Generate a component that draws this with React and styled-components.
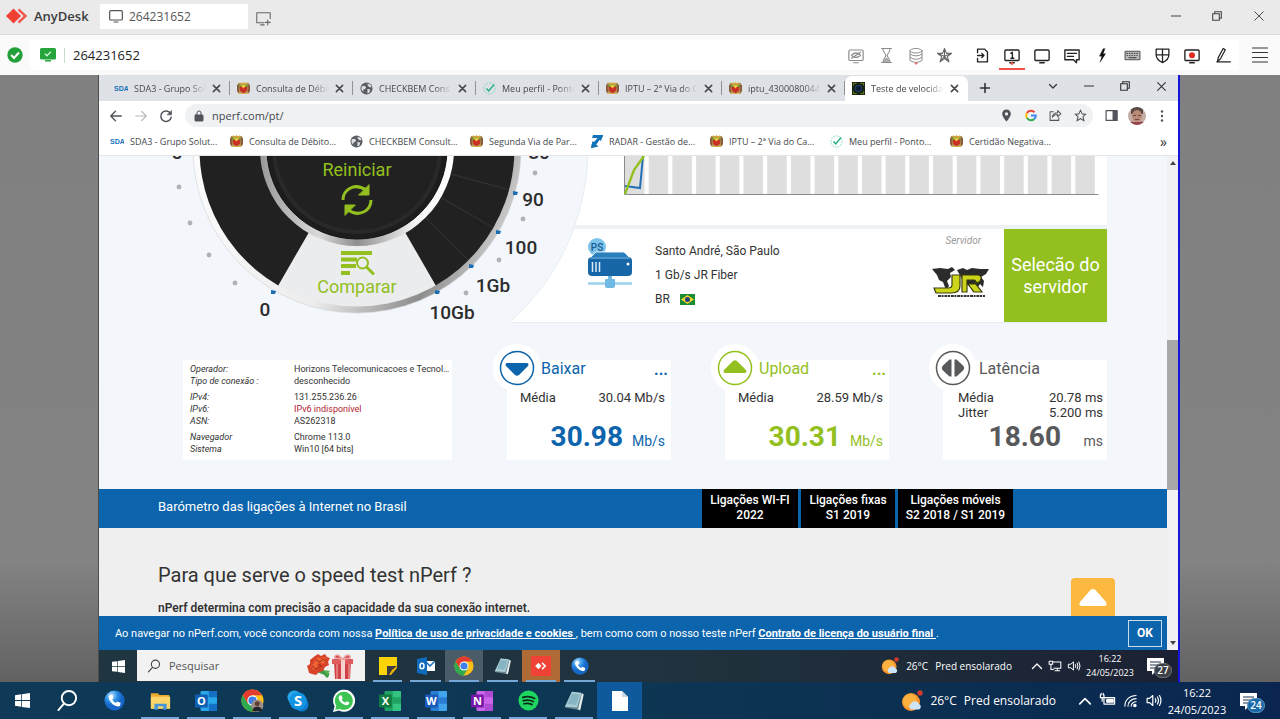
import React from "react";
import styled, { createGlobalStyle, css } from "styled-components";

const UI = `"Open Sans", "Noto Sans", sans-serif`;
const WEB = `Roboto, "Liberation Sans", sans-serif`;
const BLUE = "#0c64ac";
const GREEN = "#93c01f";

const Global = createGlobalStyle`
  *, *::before, *::after { box-sizing: border-box; }
  body { margin: 0; font-family: ${UI}; color: #333; background: #808080; }
  button { font: inherit; color: inherit; background: none; border: 0; padding: 0; margin: 0; }
  input { font: inherit; color: inherit; background: none; border: 0; padding: 0; min-width: 0; }
  svg { display: block; flex: none; }
  h2, p { margin: 0; font-weight: 400; }
`;

/* ---------- shared icon frame ---------- */
const Ico = ({ s = 16, w, h, vb = "0 0 24 24", sw = 1.6, c = "currentColor", fill = "none", children }) => (
  <svg width={w || s} height={h || s} viewBox={vb} fill={fill} stroke={c} strokeWidth={sw} strokeLinecap="round" strokeLinejoin="round" aria-hidden="true">
    {children}
  </svg>
);

const Screen = styled.div`display: flex; flex-direction: column; min-height: 100vh; overflow: hidden;`;

/* ---------- AnyDesk window ---------- */
const TitleBar = styled.header`
  display: flex; align-items: center; height: 35px; padding: 0 15px 2px 6px;
  background: #eaeaea; border-bottom: 1px solid #d9d9d9;
`;
const Brand = styled.div`
  display: flex; align-items: center; gap: 6px; width: 94px; white-space: nowrap;
  font-size: 13px; font-weight: 600; color: #3c3c3c;
`;
const SessionTab = styled.button`
  display: flex; align-items: center; gap: 5px; width: 148px; height: 25px; padding: 0 8px;
  background: #fff; font-size: 12px; color: #555;
`;
const NewTab = styled.button`margin: 4px 0 0 7px; color: #666;`;
const WindowButtons = styled.div`display: flex; align-items: center; gap: 31px; margin-left: auto; color: #444;`;
const AddressRow = styled.div`
  display: flex; align-items: center; height: 40px; padding: 0 12px 0 7px; background: #fafafa;
`;
const AddressField = styled.div`
  display: flex; align-items: center; flex: 1; height: 30px; margin: 0 13px 0 7px; padding: 0 2px 0 10px; background: #fff;
  input { flex: 1; height: 20px; margin-left: 8px; padding-left: 0; font-size: 13px; color: #1e1e1e; outline: none; }
`;
const Divider = styled.i`width: 1px; height: 15px; margin-left: 8px; background: #c9dccb;`;
const ToolGroup = styled.div`display: flex; align-items: center; margin-right: ${(p) => (p.$first ? 10 : 0)}px; color: ${(p) => (p.$first ? "#8c8c8c" : "#222")};`;
const Tool = styled.button`
  display: flex; align-items: center; justify-content: center; width: ${(p) => p.$w || 30}px; height: 30px; padding-top: 1px;
  background: ${(p) => (p.$on ? "linear-gradient(#ef5048, #ef5048) center bottom / 26px 2px no-repeat" : "none")};
`;
const MenuButton = styled.button`color: #333;`;

/* ---------- remote desktop ---------- */
const Stage = styled.main`
  flex: 1; display: flex; padding: 0 100px 0 98px;
  background: linear-gradient(#808080, #838383 80%, #626262);
`;
const Remote = styled.div`
  flex: 1; min-width: 0; display: flex; flex-direction: column;
  border-left: 1px solid #4d4d4d; border-right: 2px solid #1414dc;
`;

/* ---------- browser chrome ---------- */
const TabStrip = styled.div`display: flex; align-items: stretch; height: 26px; padding: 0 11px 0 8px; background: #dee1e6;`;
const Tab = styled.div`
  display: flex; align-items: center; width: 123px; min-width: 0; padding: 0 9px 0 7px; gap: 6px;
  font-size: 9px; color: #45494d;
  ${(p) => p.$active
    ? css`background: #fff; border-radius: 7px 7px 0 0; margin-top: 1px;`
    : css`background: linear-gradient(#8f9398, #8f9398) right center / 1px 14px no-repeat;`}
`;
const TabTitle = styled.span`
  flex: 1; min-width: 0; overflow: hidden; white-space: nowrap;
  -webkit-mask-image: linear-gradient(90deg, #000 76%, transparent);
  mask-image: linear-gradient(90deg, #000 76%, transparent);
`;
const PlainButton = styled.button`display: flex; align-items: center; justify-content: center;`;
const TabControls = styled.div`display: flex; align-items: center; gap: 26px; margin-left: auto; padding-bottom: 4px; color: #333;`;
const Toolbar = styled.div`display: flex; align-items: center; height: 29px; padding: 0 10px; background: #fff; color: #50545a;`;
const NavButtons = styled.div`display: flex; gap: 11px; width: 76px;`;
const Omnibox = styled.div`
  display: flex; align-items: center; flex: 1; height: 23px; padding: 0 6px 0 8px; border-radius: 12px; background: #f0f1f3;
  input { flex: 1; margin-left: 7px; font-size: 11px; outline: none; color: #43474b; }
`;
const IconRow = styled.div`display: flex; align-items: center; gap: ${(p) => p.$gap}px;`;
const ToolbarEnd = styled(IconRow)`margin-left: 12px;`;
const Bookmarks = styled.nav`
  display: flex; align-items: center; height: 26px; padding: 0 11px 3px; background: #fff; border-bottom: 1px solid #e3e5e8;
`;
const Bookmark = styled.a`
  display: flex; align-items: center; gap: 6px; width: 120px; white-space: nowrap;
  font-size: 9px; color: #45494d; text-decoration: none;
`;
const More = styled(PlainButton)`margin-left: auto; font-size: 14px; color: #333;`;

/* ---------- web page ---------- */
const Viewport = styled.div`flex: 1; display: flex; min-height: 0; font-family: ${WEB};`;
const Page = styled.div`position: relative; flex: 1; min-width: 0; display: flex; flex-direction: column; background: #f3f6fb;`;
const Hero = styled.section`display: flex; padding-right: 60px;`;
const Gauge = styled.div`position: relative; z-index: 1; width: 490px; height: 167px; margin-right: -82px; flex: none; pointer-events: none;`;
const GaugeButton = styled.button`
  position: absolute; left: 198px; top: ${(p) => p.$top}px; width: 120px;
  display: flex; flex-direction: column; align-items: center;
  font-size: 18px; line-height: 22px; color: ${GREEN}; pointer-events: auto;
`;
const HeroPanels = styled.div`flex: 1; min-width: 0; display: flex; flex-direction: column; gap: 4px; background: #edf2f7;`;
const ChartPanel = styled.div`height: 69px; padding: 0 8px 0 117px; background: #fff;`;
const ServerPanel = styled.div`display: flex; height: 94px; padding-left: 80px; background: #fff; border-bottom: 1px solid #e8edf2;`;
const ServerArt = styled.div`padding-top: 9px;`;
const ServerInfo = styled.div`
  flex: 1; display: flex; flex-direction: column; padding: 10px 0 0 22px; font-size: 12px; line-height: 24px; color: #333;
  span { display: flex; align-items: center; gap: 10px; }
`;
const Sponsor = styled.div`
  display: flex; flex-direction: column; align-items: flex-end; gap: 20px; width: 70px; padding: 5px 14px 0 0;
  font-size: 10px; line-height: 13px; color: #999;
  em { margin-right: 9px; }
`;
const ServerButton = styled.button`
  && { width: 103px; background: ${GREEN}; color: #fff; font-size: 18px; line-height: 22px; }
`;
const Results = styled.section`display: flex; gap: 55px; padding: 37px 60px 29px 84px;`;
const InfoCard = styled.div`
  width: 269px; height: 100px; padding: 3px 2px 0 7px; background: #fff; font-size: 9px; line-height: 12px;
`;
const InfoTable = styled.table`
  width: 100%; border-collapse: collapse; table-layout: fixed;
  th { width: 104px; padding: 0; font-weight: 400; font-style: italic; text-align: left; }
  td { padding: 0; white-space: nowrap; overflow: hidden; text-overflow: ellipsis; }
`;
const InfoRow = styled.tr`
  color: #333;
  td { color: ${(p) => (p.$warn ? "#b3232f" : "#333")}; }
  th, td { padding-top: ${(p) => (p.$gap ? 4 : 0)}px; height: ${(p) => (p.$gap ? 16 : 12)}px; }
`;
const Stats = styled.div`flex: 1; display: grid; grid-template-columns: repeat(3, 1fr); gap: 54px;`;
const StatCard = styled.article`position: relative; background: #fff; color: ${(p) => p.$c};`;
const StatBadge = styled.div`
  position: absolute; left: -14px; top: -16px; width: 48px; height: 48px; border-radius: 50%; background: #fff;
  display: flex; align-items: center; justify-content: center;
`;
const StatTitle = styled.div`
  display: flex; justify-content: space-between; height: 17px; padding: 0 3px 0 ${(p) => (p.$wide ? 36 : 34)}px;
  font-size: 16px; line-height: 17px;
  b { line-height: 20px; }
`;
const StatRows = styled.dl`
  margin: 13px 0 0; min-height: 30px; padding: 0 ${(p) => (p.$wide ? 4 : 6)}px 0 ${(p) => (p.$wide ? 15 : 13)}px;
  display: grid; grid-template-columns: auto auto; justify-content: space-between; align-content: start;
  font-size: 13px; line-height: 15px; color: #333;
  dd { margin: 0; text-align: right; }
`;
const StatValue = styled.div`
  display: flex; align-items: baseline; justify-content: flex-end; padding-right: ${(p) => (p.$wide ? 4 : 6)}px;
  font-size: 28px; line-height: 34px; font-weight: 700;
  small { width: 42px; text-align: right; font-size: 14px; font-weight: 400; }
`;
const Barometer = styled.section`
  display: flex; height: 39px; padding-left: 59px; background: ${BLUE}; color: #fff; flex: none;
  p { flex: 1; font-size: 13px; line-height: 35px; }
`;
const BarLinks = styled.div`display: flex; gap: 3px; padding-right: 154px;`;
const BarButton = styled.button`
  && { width: ${(p) => p.$w}px; padding-bottom: 2px; background: #000; color: #fff; font-size: 12px; font-weight: 500; line-height: 15px; text-align: center; }
`;
const About = styled.section`
  flex: 1; min-height: 88px; padding: 34px 59px 0; background: #efefef;
  h2 { font-size: 20px; line-height: 26px; color: #333; }
  p { margin-top: 13px; font-size: 12px; line-height: 15px; font-weight: 600; color: #333; }
`;
const BackToTop = styled.button`
  && { position: absolute; right: 52px; bottom: 34px; width: 44px; height: 38px; border-radius: 4px 4px 0 0; background: #fcb83f; }
  display: flex; align-items: center; justify-content: center;
`;
const CookieBar = styled.footer`
  display: flex; align-items: center; justify-content: space-between; height: 34px; padding: 0 5px 0 16px;
  background: ${BLUE}; color: #fff; font-size: 11px; flex: none;
  a { color: #fff; font-weight: 700; }
`;
const OkButton = styled.button`
  && { width: 34px; height: 27px; border: 1px solid #c9dcec; font-size: 12px; font-weight: 700; }
`;
const ScrollBar = styled.div`
  display: flex; flex-direction: column; align-items: center; justify-content: space-between; width: 11px; padding: 5px 0;
  background: linear-gradient(#a8a8a8, #a8a8a8) center 184px / 100% 150px no-repeat, #f1f1f3;
`;

/* ---------- taskbars ---------- */
const Taskbar = styled.footer`
  display: flex; align-items: stretch; flex: none; height: ${(p) => (p.$remote ? 32 : 37)}px; color: #fff;
  font-size: ${(p) => (p.$remote ? 10 : 12)}px;
  background: ${(p) => (p.$remote ? "linear-gradient(90deg, #1f3540, #20323d 55%, #1b2133)" : "linear-gradient(90deg, #0e3a57, #0d3653 50%, #0a2650)")};
`;
const Launch = styled.button`
  && {
    display: flex; align-items: center; justify-content: center; width: ${(p) => p.$w}px;
    background:
      ${(p) => (p.$run ? "linear-gradient(#76a9d8, #76a9d8) center bottom / calc(100% - 8px) 2px no-repeat," : "")}
      ${(p) => p.$bg || "transparent"};
  }
`;
const SearchField = styled.label`
  display: flex; align-items: center; gap: 8px; width: 228px; height: 31px; margin-right: 4px; padding: 0 10px; background: #f2f2f2; color: #444;
  input { flex: 1; width: 60px; font-size: 11px; outline: none; }
  input::placeholder { color: #555; opacity: 1; }
`;
const Tray = styled.div`display: flex; align-items: center; margin-left: auto; white-space: nowrap;`;
const Weather = styled.div`display: flex; align-items: center; gap: 7px; margin-right: ${(p) => (p.$remote ? 19 : 22)}px;`;
const Clock = styled.time`
  width: ${(p) => (p.$remote ? 58 : 70)}px; text-align: center;
  font-size: ${(p) => (p.$remote ? 9 : 11)}px; line-height: ${(p) => (p.$remote ? 14 : 17)}px;
`;
const Notice = styled.button`
  && { position: relative; width: ${(p) => (p.$remote ? 31 : 34)}px; height: 24px; margin: 0 ${(p) => (p.$remote ? 0 : 6)}px 0 8px; }
`;
const Count = styled.span`
  position: absolute; left: 7px; top: 9px; min-width: 18px; height: 15px; border-radius: 8px; text-align: center;
  background: ${(p) => (p.$remote ? "#3c3f46" : "#1d6aa8")}; border: 1px solid ${(p) => (p.$remote ? "#777" : "#5b98c8")};
  font-size: 10px; line-height: 13px; font-weight: 600;
`;

/* ---------- drawings ---------- */
const X = ({ s = 9, sw = 1.5 }) => <Ico s={s} vb="0 0 10 10" sw={sw}><path d="M1.5 1.5l7 7M8.5 1.5l-7 7" /></Ico>;
const Minus = () => <Ico s={10} vb="0 0 10 10" sw={1.2}><path d="M0.5 5h9" /></Ico>;
const Restore = () => <Ico s={10} vb="0 0 10 10" sw={1.1}><path d="M.7 2.7h6.600v6.600h-6.600zM2.700 2.500V.7h6.600v6.600H7.500" strokeLinejoin="miter" /></Ico>;
const Mon = ({ children, s = 18, sw = 1.6, c }) => <Ico s={s} sw={sw} c={c}><rect x="2.500" y="4" width="19" height="14" rx="1.500" /><path d="M9 21h6" />{children}</Ico>;

const Crest = () => (
  <svg width="13" height="13" viewBox="0 0 14 14" aria-hidden="true">
    <path d="M1 1h12v11l-2 1H3l-2-1z" fill="#b08a55" />
    <path d="M3 0l2 1.500L7 0l2 1.500L11 0v3H3z" fill="#d8a93c" />
    <path d="M2 3h10v3H2z" fill="#6f9a35" />
    <path d="M3 5h8v4l-4 3.500L3 9z" fill="#c92f25" />
    <path d="M4 3.500h6L7 7z" fill="#f2cf45" />
    <path d="M0 3v7l2 2V3zM14 3v7l-2 2V3z" fill="#8a5a3c" />
    <path d="M2 11l5 1 5-1v2H2z" fill="#d9b357" />
  </svg>
);
const Sda = () => (
  <svg width="14" height="12" viewBox="0 0 14 12" aria-hidden="true">
    <text x="0" y="9" fontSize="7" fontWeight="700" fontFamily="Liberation Sans" fill="#1673b8">SDA</text>
  </svg>
);
const GlobeIcon = () => (
  <svg width="13" height="13" viewBox="0 0 14 14" aria-hidden="true">
    <circle cx="7" cy="7" r="6.500" fill="#5a5e63" />
    <path d="M2 4.500l2.500-.5 2 1.500-1 2-2 .5v2.500L1.500 8zM8 2l3.500 1 .8 3-2.300-.5L8.500 4zM8 7.500l3 .5-1 3.500-2 .5z" fill="#dee1e6" />
  </svg>
);
const CheckRing = () => (
  <svg width="13" height="13" viewBox="0 0 14 14" fill="none" aria-hidden="true">
    <circle cx="7" cy="7" r="6" stroke="#7fd6b4" strokeDasharray="2 1" />
    <path d="M3.800 7l2.400 2.700L12 2.500" stroke="#1fae7b" strokeWidth="1.500" />
  </svg>
);
const NperfFav = () => (
  <svg width="13" height="13" viewBox="0 0 14 14" aria-hidden="true">
    <rect width="14" height="14" fill="#16210f" /><path d="M1.500 4V1.500H5M9 1.500h3.500V4M12.500 10v2.500H9M5 12.500H1.500V10" fill="none" stroke="#6f8a24" />
    <circle cx="7" cy="7" r="3.500" fill="#0c1a30" stroke="#234a7c" />
  </svg>
);
const Radar = () => (
  <svg width="13" height="14" viewBox="0 0 13 14" aria-hidden="true">
    <path d="M3 1h10l-2 6-1.500-1-3.500 5 2 1.500-7 1.500 1.500-7L4 8l3.500-4H2z" fill="#1273b8" />
    <path d="M3 1h10l-1 3H5zM1 14l1-4 5 1 1 1.500z" fill="#1273b8" />
  </svg>
);
const FAVS = { sda: Sda, crest: Crest, globe: GlobeIcon, check: CheckRing, nperf: NperfFav, radar: Radar };

const WinLogo = ({ s = 14 }) => (
  <svg width={s} height={s} viewBox="0 0 16 16" fill="#fff" aria-hidden="true"><path d="M0 2.300l6.500-.9v6.100H0zM7.300 1.300L16 0v7.500H7.300zM0 8.400h6.500v6.200L0 13.700zM7.300 8.400H16V16l-8.700-1.200z" /></svg>
);
const Phone = ({ s = 20 }) => (
  <svg width={s} height={s} viewBox="0 0 24 24" aria-hidden="true">
    <defs><radialGradient id="ph" cx=".35" cy=".25"><stop offset="0" stopColor="#b9e2fb" /><stop offset=".6" stopColor="#2d8fe4" /><stop offset="1" stopColor="#1667c8" /></radialGradient></defs>
    <circle cx="12" cy="12" r="11.500" fill="url(#ph)" />
    <path d="M7 5.500l2.500-.5 1.500 4-1.700 1.300c.8 2.200 2.200 3.600 4.400 4.400l1.300-1.700 4 1.500-.5 2.800c-.3 1.200-2 1.800-3.500 1.400C10.500 17.500 6.500 13.500 5.500 9 5.100 7.500 5.800 5.800 7 5.500z" fill="#fff" />
  </svg>
);
const Folder = () => (
  <svg width="21" height="20" viewBox="0 0 24 22" aria-hidden="true"><path d="M1 2h8l2 2h11v15H1z" fill="#e9a92f" /><path d="M1 6h22v14H1z" fill="#fbd567" /><path d="M5 21v-7h14v7h-4v-4H9v4z" fill="#4596d8" /></svg>
);
const OfficeTile = ({ l, a, b, d, s = 22 }) => (
  <svg width={s} height={s} viewBox="0 0 24 24" aria-hidden="true">
    <rect x="6" y="1" width="18" height="22" rx="1.500" fill={a} /><path d="M15 1h7.500q1.500 0 1.500 1.500V8h-9zM15 15h9v6.500q0 1.500-1.500 1.500H15z" fill={b} />
    <rect x="0" y="5" width="14" height="14" rx="1" fill={d} />
    <text x="7" y="16" fontSize="12" fontWeight="700" textAnchor="middle" fill="#fff" fontFamily="Open Sans">{l}</text>
  </svg>
);
const OutlookOld = () => (
  <svg width="18" height="18" viewBox="0 0 18 18" aria-hidden="true"><path d="M8 4h10v10H8z" fill="#fff" /><path d="M9 5l4 4 5-5" fill="none" stroke="#0f6cbd" strokeWidth="1.500" /><path d="M0 2l10-2v18L0 16z" fill="#0f6cbd" /><ellipse cx="5" cy="9" rx="2" ry="2.800" fill="none" stroke="#fff" strokeWidth="1.500" /></svg>
);
const Chrome = ({ s = 20, person }) => (
  <svg width={s} height={s} viewBox="0 0 24 24" aria-hidden="true">
    <circle cx="12" cy="12" r="11.500" fill="#fbc116" />
    <path d="M2 6.300A11.500 11.500 0 0 0 11.500 23.500L17 14.800 7 15z" fill="#2da94f" />
    <path d="M2 6.300L7 15l5-8.500h10A11.500 11.500 0 0 0 2 6.300z" fill="#e33b2e" />
    <circle cx="12" cy="12" r="5.400" fill="#fff" /><circle cx="12" cy="12" r="4.300" fill="#3f7fe8" />
    {person && <g><circle cx="17" cy="17.500" r="6.300" fill="#a08f86" /><circle cx="17" cy="15.500" r="2.600" fill="#5a3d33" /><path d="M12 23c0-6 10-6 10 0z" fill="#23232b" /></g>}
  </svg>
);
const Skype = () => (
  <svg width="22" height="22" viewBox="0 0 24 24" aria-hidden="true"><circle cx="8" cy="8" r="7.500" fill="#28a8ea" /><circle cx="16" cy="16" r="7.500" fill="#0f7bd0" /><circle cx="12" cy="12" r="9.500" fill="#1394e3" /><text x="12" y="17.500" fontSize="16" fontWeight="700" textAnchor="middle" fill="#fff" fontFamily="Open Sans">S</text></svg>
);
const WhatsApp = () => (
  <svg width="24" height="24" viewBox="0 0 24 24" aria-hidden="true"><path d="M1 23l1.600-5.800A11 11 0 1 1 7 21.400z" fill="#fff" /><path d="M3.200 20.800l1.100-4A9 9 0 1 1 8 20z" fill="#3cc351" /><path d="M8 6.500l1.500-.2 1.200 2.900-1 1.300c.8 1.500 2 2.500 3.600 3.200l1.200-1.400 2.800 1.300c.1 2-1.700 3-3.500 2.600-3.600-.9-6.300-3.400-7.100-6.400-.3-1.400.3-2.800 1.300-3.300z" fill="#fff" /></svg>
);
const Spotify = () => (
  <svg width="21" height="21" viewBox="0 0 24 24" aria-hidden="true"><circle cx="12" cy="12" r="11.500" fill="#1ed760" /><path d="M5.500 8.500c5-1.500 9.500-1 13.500 1.200M6 12.200c4.500-1.200 8-.8 11.500 1M6.800 15.700c3.500-.8 6.500-.5 9.200 1" fill="none" stroke="#10281a" strokeWidth="2" strokeLinecap="round" /></svg>
);
const Notepad = ({ s = 21 }) => (
  <svg width={s} height={s} viewBox="0 0 24 24" aria-hidden="true"><path d="M9 2l13 2-4 19L1 20z" fill="#64838c" /><path d="M9 2l11 1-5 17L1 19z" fill="#a9ccd5" /><path d="M9 4l9 1-4 12-10-1z" fill="#86b4c2" /><path d="M20.500 4l2 1-4 18-2.500-1z" fill="#e9efef" /></svg>
);
const FileIcon = () => (
  <svg width="16" height="20" viewBox="0 0 16 20" aria-hidden="true"><path d="M0 0h10l6 6v14H0z" fill="#fff" /><path d="M10 0v6h6z" fill="#c9d6e3" /></svg>
);
const Sticky = () => (
  <svg width="18" height="18" viewBox="0 0 18 18" aria-hidden="true"><path d="M0 0h18v9l-9 9H0z" fill="#fcd307" /><path d="M8 9h10l-3 3-1 4-4 2H8z" fill="#3d3d3d" /><path d="M10 18l3-5 5-4v2l-6 7z" fill="#f0b400" /></svg>
);
const AnyTile = () => (
  <svg width="20" height="20" viewBox="0 0 19 19" aria-hidden="true"><rect width="19" height="19" rx="1" fill="#ef4136" /><path d="M4 9.500l3-3 3 3-3 3z" fill="#fff" /><path d="M10.500 6.500l3 3-3 3" fill="none" stroke="#fff" strokeWidth="1.500" /></svg>
);
const Gift = () => (
  <svg width="48" height="28" viewBox="0 0 48 28" aria-hidden="true">
    <path d="M12 15l9 10M9 18l13 5" stroke="#3f9b46" strokeWidth="3" />
    <path d="M8 4l3-2 3 2 4-2 2 3 3 1-2 4 1 3-4 2-2 4-4 1-3 3-4-1-3-1-1-4-1-3 3-2V8z" fill="#d8442a" />
    <path d="M11 5l3 2 4-2 1 4-3 3-4-2-2 3 1 3-4 2-3-3 2-3z" fill="#ec6336" />
    <path d="M9 8l4 2 3-3 3 2M5 14l4 3 5-3M12 12l3 3" fill="none" stroke="#a5290f" /><path d="M17 18l6 1-3 4z" fill="#5bb04d" />
    <path d="M27 10h17l-1 17H28z" fill="#cf4248" /><path d="M25 7h21v5H25z" fill="#dd5a5d" /><path d="M30 12v15M42 12v15" stroke="#e98a88" strokeWidth="1.500" /><path d="M34 7h4v20h-4z" fill="#f6d3cf" />
    <path d="M35 7c-4-6-8-4-7-1zM36 7c4-6 8-4 7-1z" fill="#c9454b" stroke="#eda09c" strokeWidth="1.500" />
  </svg>
);
const Sun = ({ s }) => (
  <svg width={s} height={s} viewBox="0 0 22 22" aria-hidden="true"><circle cx="10" cy="12" r="9" fill="#f8962c" /><circle cx="9" cy="11" r="7" fill="#fbb040" /><path d="M10 19.500a3.500 3.500 0 0 1 0-6 4.500 4.500 0 0 1 8 .5 3 3 0 0 1 0 5.500z" fill="#cfe3f7" /><circle cx="19" cy="3" r="2.700" fill="#d23b2a" /></svg>
);
const Speaker = ({ s }) => <Ico s={s} sw={1.7}><path d="M3 9h3.500L11 5v14l-4.500-4H3zM14.500 9.500q1.500 2.500 0 5M17.500 7q3 5 0 10M20.500 5q4 7 0 14" /></Ico>;
const Caret = ({ s }) => <Ico s={s} vb="0 0 12 12" sw={1.4}><path d="M1.500 8.500L6 4l4.500 4.500" /></Ico>;

/* ---------- data ---------- */
const TABS = [
  ["sda", "SDA3 - Grupo Solut"], ["crest", "Consulta de Débit"], ["globe", "CHECKBEM Cons"], ["check", "Meu perfil - Ponto"],
  ["crest", "IPTU – 2ª Via do C"], ["crest", "iptu_4300080044"], ["nperf", "Teste de velocidade"],
];
const MARKS = [
  ["sda", "SDA3 - Grupo Solut..."], ["crest", "Consulta de Débito..."], ["globe", "CHECKBEM Consult..."], ["crest", "Segunda Via de Par..."],
  ["radar", "RADAR - Gestão de..."], ["crest", "IPTU – 2ª Via do Ca..."], ["check", "Meu perfil - Ponto..."], ["crest", "Certidão Negativa..."],
];
const INFO = [
  ["Operador:", "Horizons Telecomunicacoes e Tecnologia"], ["Tipo de conexão :", "desconhecido"], ["IPv4:", "131.255.236.26", "gap"],
  ["IPv6:", "IPv6 indisponível", "warn"], ["ASN:", "AS262318"], ["Navegador", "Chrome 113.0", "gap"], ["Sistema", "Win10 [64 bits]"],
];
const STATS = [
  { t: "Baixar", c: BLUE, rows: [["Média", "30.04 Mb/s"]], v: "30.98", u: "Mb/s", more: true, d: "M6 15q-1.500-3 1.500-3h19q3 0 1.500 3l-9 9q-2 1.500-4 0z" },
  { t: "Upload", c: GREEN, rows: [["Média", "28.59 Mb/s"]], v: "30.31", u: "Mb/s", more: true, d: "M6 19q-1.500 3 1.500 3h19q3 0 1.500-3l-9-9q-2-1.500-4 0z" },
  { t: "Latência", c: "#58595b", wide: true, rows: [["Média", "20.78 ms"], ["Jitter", "5.200 ms"]], v: "18.60", u: "ms", d: "M15.500 8.500v17h-2l-7-6.500q-1.500-2 0-4l7-6.500zM18.500 8.500v17h2l7-6.500q1.500-2 0-4l-7-6.500z" },
];
const DOTS = [[80, 31], [91, 67], [110, 99], [136, 127], [436, 17], [424, 63], [400, 104], [367, 137]];
const TICKS = [[175, 136], [417, 37], [400, 76], [373, 110], [339, 136]];
const SCALE = [[78, 3, "5"], [166, 160, "0"], [440, 3, "80"], [434, 50, "90"], [422, 98, "100"], [394, 136, "1Gb"], [353, 163, "10Gb"]];

const polar = (r, deg) => [258 + r * Math.sin((deg * Math.PI) / 180), -7 + r * Math.cos((deg * Math.PI) / 180)].join(" ");

function GaugeDial() {
  return (
    <svg width="490" height="167" viewBox="0 0 490 167" aria-hidden="true">
      <defs>
        <linearGradient id="rim" x1="0" x2="1" y1=".3" y2=".7"><stop offset="0" stopColor="#fff" /><stop offset=".55" stopColor="#ececec" /><stop offset=".82" stopColor="#8d8d8d" /><stop offset="1" stopColor="#d6d6d6" /></linearGradient>
        <linearGradient id="hub" x1="0" x2="1"><stop offset="0" stopColor="#999" /><stop offset=".3" stopColor="#d9d9d9" /><stop offset=".5" stopColor="#8f8f8f" /><stop offset=".8" stopColor="#f4f4f4" /><stop offset="1" stopColor="#fff" /></linearGradient>
      </defs>
      <circle cx="258" cy="-7" r="231" fill="#f3f6fb" />
      <path d={`M${polar(231, 42)}A231 231 0 0 0 ${polar(231, 95)}`} fill="none" stroke="#e9eef4" />
      <circle cx="258" cy="-7" r="164" fill="url(#rim)" stroke="#cfd2d5" strokeWidth=".6" />
      <circle cx="258" cy="-7" r="157.500" fill="#ebecee" />
      <path d={`M${polar(157.5, 30)}A157.500 157.500 0 0 0 ${polar(157.5, 110)}L${polar(90, 110)}A90 90 0 0 1 ${polar(90, 30)}Z`} fill="#212121" />
      <path d={`M${polar(157.5, -30)}A157.500 157.500 0 0 1 ${polar(157.5, -110)}L${polar(90, -110)}A90 90 0 0 0 ${polar(90, -30)}Z`} fill="#212121" />
      {[75, 60, 45].map((a) => <path key={a} d={`M${polar(97, a)}L${polar(157, a)}`} stroke="#3a3a3a" strokeWidth=".8" />)}
      <circle cx="258" cy="-7" r="97" fill="url(#hub)" />
      <circle cx="258" cy="-7" r="90" fill="#1d1d1d" stroke="#111" />
      <circle cx="258" cy="-7" r="83" fill="#212121" stroke="#292929" strokeWidth="4" />
      {DOTS.map(([x, y]) => <circle key={x} cx={x} cy={y} r="2.400" fill="#aeb1b5" />)}
      {TICKS.map(([x, y]) => <path key={x} d={`M${x - 3} ${y - 2}l5 1-1 3h-4z`} fill="#1d6fb4" />)}
      <g fontFamily="Roboto, Liberation Sans" fontSize="19" fontWeight="500" textAnchor="middle" fill="#2c2c2c">
        {SCALE.map(([x, y, t]) => <text key={t} x={x} y={y}>{t}</text>)}
      </g>
    </svg>
  );
}

function SpeedChart() {
  return (
    <svg width="100%" height="39" viewBox="0 0 475 39" preserveAspectRatio="none" aria-label="Gráfico">
      {Array.from({ length: 20 }, (_, i) => <rect key={i} x={1 + i * 23.7} y="0" width="19.500" height="38" fill="#dedede" />)}
      <path d="M.5 0v38.500h474" fill="none" stroke="#8a8a8a" />
      <path d="M1 30l15 2 3-32" fill="none" stroke="#2471b5" strokeWidth="2" />
      <path d="M1 38L10 14 20 0" fill="none" stroke={GREEN} strokeWidth="2.400" />
    </svg>
  );
}

const ServerDrawing = () => (
  <svg width="46" height="52" viewBox="0 0 46 52" aria-hidden="true">
    <circle cx="10" cy="9" r="9" fill="#7dc3ea" />
    <path d="M9 14h28l8 8H1z" fill="#2a80bd" stroke="#fff" strokeWidth=".8" />
    <text x="10" y="13" fontSize="10" fontWeight="500" textAnchor="middle" fill="#185b92" fontFamily="Roboto">PS</text>
    <rect x="1" y="19" width="44" height="19" rx="4" fill="#1766a8" />
    <path d="M3 20h40" stroke="#7dc3ea" /><path d="M5.500 24v10M9 24v10M12.500 24v10" stroke="#d7ecf8" strokeWidth="1.500" /><circle cx="41" cy="26" r="1.500" fill="#fff" />
    <path d="M1 45.500h17M28 45.500h17" stroke="#9bd0ee" strokeWidth="2.500" /><path d="M21 38h4v3h2q1 0 1 1v6q0 2-2 2h-6q-2 0-2-2v-6q0-1 1-1h2z" fill="#6fb9e4" />
  </svg>
);
const JrLogo = () => (
  <svg width="58" height="32" viewBox="0 0 58 32" aria-hidden="true">
    <path d="M0 2l8-1 8 1 4-2 3 3-5 3 1 4-4 4 2 5-3 4-3-8-4-2-2-5zM25 3l6-2 4 2 5-2 8 1 9 0-3 5-5 3 3 4-1 6-3-3-4 6-3 2-3-6-6-2-2-5z" fill="#2b2b2b" />
    <path d="M20 8h8v11q0 7-9 7H4l-2-5h14q4 0 4-3z" fill="#cdd51a" stroke="#3b3d10" strokeWidth="1.200" />
    <path d="M30 25V8h15q5 0 4 4-1 4-6 4l7 9h-8l-6-8h6q2 0 2-2t-2-2h-7v12z" fill="#cdd51a" stroke="#3b3d10" strokeWidth="1.200" />
    <path d="M6 29h47" stroke="#333" strokeWidth="2" strokeDasharray="3 .6 2 .8" />
  </svg>
);
const BrazilFlag = () => (
  <svg width="15" height="11" viewBox="0 0 15 11" aria-label="Brasil"><rect width="15" height="11" fill="#1d8a35" /><path d="M7.500 1L14 5.500 7.500 10 1 5.500z" fill="#f5d32c" /><circle cx="7.500" cy="5.500" r="2.500" fill="#25407e" /></svg>
);

function SystemTray({ remote }) {
  const s = remote ? 14 : 17;
  return (
    <Tray>
      <Weather $remote={remote}>
        <Sun s={remote ? 18 : 22} /><span>26°C</span><span>Pred ensolarado</span>
      </Weather>
      <IconRow $gap={remote ? 5 : 7}>
        <Caret s={remote ? 12 : 14} />
        {remote
          ? <Ico s={14} sw={1.8}><path d="M8 5h14v11H10M12 20h8M16 16v4M2 4h6v5H2zM5 9v9h4" /></Ico>
          : <Ico s={17} sw={1.7}><path d="M7 8h15v9H7z" /><path d="M11 10.500h9v4h-9z" fill="#fff" /><path d="M2 4v4h5V4M4.500 8v5M3 2v2M6 2v2" /></Ico>}
        {!remote && <Ico s={15} sw={1.7}><path d="M3 21C3 11 11 4 21 4M8 21c0-7 6-12 13-12M13 21c0-4 4-7 8-7" /><circle cx="19" cy="20" r="2" fill="#fff" /></Ico>}
        <Speaker s={s} />
      </IconRow>
      <Clock $remote={remote}>16:22<br />24/05/2023</Clock>
      <Notice $remote={remote} aria-label="Notificações">
        <svg width="18" height="18" viewBox="0 0 18 18" aria-hidden="true"><path d="M0 1h17v13H9l-4 4v-4H0z" fill="#fff" /><path d="M3 5h11M3 8h11M3 11h7" stroke="#1f3347" /></svg>
        <Count $remote={remote}>{remote ? 27 : 24}</Count>
      </Notice>
    </Tray>
  );
}

export default function App() {
  return (
    <Screen>
      <Global />
      <TitleBar>
        <Brand>
          <svg width="22" height="16" viewBox="0 0 22 16" aria-hidden="true"><path d="M0 8l7.500-7.500L15 8l-7.500 7.500z" fill="#ef4036" /><path d="M12.500 1.500L19.500 8l-7 6.500" fill="none" stroke="#ef5a50" strokeWidth="2.400" /></svg>
          AnyDesk
        </Brand>
        <SessionTab><Mon s={16} sw={1.8} />264231652</SessionTab>
        <NewTab aria-label="Nova sessão"><Ico s={17} sw={1.5}><path d="M21.500 12V4h-19v14h10M8 21h5M18 14v7M14.500 17.500h7" /></Ico></NewTab>
        <WindowButtons>
          <PlainButton aria-label="Minimizar"><Minus /></PlainButton>
          <PlainButton aria-label="Restaurar"><Restore /></PlainButton>
          <PlainButton aria-label="Fechar"><X s={12} sw={0.8} /></PlainButton>
        </WindowButtons>
      </TitleBar>
      <AddressRow>
        <svg width="16" height="16" viewBox="0 0 16 16" aria-hidden="true"><circle cx="8" cy="8" r="7.700" fill="#23a03a" /><path d="M4.200 8l2.800 3 5-5.500" fill="none" stroke="#fff" strokeWidth="2" /></svg>
        <AddressField>
          <svg width="16" height="14" viewBox="0 0 16 14" aria-hidden="true"><rect y="0" width="16" height="11.500" rx="1.500" fill="#25a53b" /><path d="M5 12.800h6" stroke="#25a53b" strokeWidth="1.500" /><path d="M4.800 5.600l2.200 2.200 4-4.200" fill="none" stroke="#d9f5dd" strokeWidth="1.300" /></svg>
          <Divider />
          <input aria-label="Endereço remoto" defaultValue="264231652" />
          <ToolGroup $first>
            <Tool aria-label="Privacidade"><Mon><path d="M6 11q6-6 12 0-6 6-12 0zM6 15L18 7" /></Mon></Tool>
            <Tool aria-label="Aguardar"><Ico s={17} sw={1.5}><path d="M5 2h14M5 22h14M7 2c0 6 4 7 4 10s-4 4-4 10M17 2c0 6-4 7-4 10s4 4 4 10M9 20l3-4 3 4z" /></Ico></Tool>
            <Tool aria-label="Dados"><Ico s={18} sw={1.3}><ellipse cx="12" cy="5" rx="8" ry="3" /><path d="M4 5v13q8 5 16 0V5M4 9.500q8 5 16 0M4 14q8 5 16 0" /><circle cx="12" cy="22" r="1" stroke="#ef5048" /></Ico></Tool>
            <Tool $w={26} aria-label="Favorito"><Ico s={17} sw={1.5} c="#666"><path d="M12 2l2.700 7H22l-6 4.500 2.300 7.500-6.300-4.500L5.700 21 8 13.500 2 9h7.300zM12 2v14.500M22 9l-10 4M2 9l10 4M18.300 21L12 13M5.700 21L12 13" /></Ico></Tool>
          </ToolGroup>
          <ToolGroup>
            <Tool aria-label="Transferir"><Ico s={17} sw={1.9}><path d="M5 8V3h10l4 4v14H5v-5M5 12h9M11 9l3 3-3 3" /></Ico></Tool>
            <Tool $on aria-label="Monitor 1"><Mon sw={1.8}><path d="M10.500 8.500L12.500 7v8M10.500 15h4" /><circle cx="12" cy="22" r="1" stroke="#ef5048" /></Mon></Tool>
            <Tool aria-label="Monitor"><Mon sw={1.8} /></Tool>
            <Tool aria-label="Bate-papo"><Ico s={18} sw={1.8}><path d="M2.500 4h19v13H18v4l-4-4H2.500zM6 8.500h12M6 12.500h8" /></Ico></Tool>
            <Tool aria-label="Ações"><Ico s={15} sw={0.5} fill="#111" c="#111"><path d="M13 1L7 13h4l-3 10 9-14h-4l3-8z" /></Ico></Tool>
            <Tool aria-label="Teclado"><Ico s={17} sw={1.5} c="#555"><rect x="1.500" y="6" width="21" height="12" rx="1" fill="#bbb" /><path d="M4 9h16M4 12h16" strokeDasharray="1 2.500" /><path d="M7 15h10" /></Ico></Tool>
            <Tool aria-label="Permissões"><Ico s={17} sw={1.8}><path d="M3 3h18v8q0 7-9 11-9-4-9-11zM12 3v19M3 11h18" /></Ico></Tool>
            <Tool aria-label="Gravar"><Mon sw={1.8}><circle cx="12" cy="11" r="4" fill="#e02b20" stroke="none" /></Mon></Tool>
            <Tool aria-label="Quadro"><Ico s={17} sw={1.7}><path d="M4 21h19M5 20l1-5L13 2l3 2L9 17z" /></Ico></Tool>
          </ToolGroup>
        </AddressField>
        <MenuButton aria-label="Menu"><Ico w={16} h={16} vb="0 0 16 16" sw={1.1}><path d="M.5 1h15M.5 5.500h15M.5 10.500h15M.5 15h15" /></Ico></MenuButton>
      </AddressRow>

      <Stage>
        <Remote>
          <TabStrip>
            {TABS.map(([f, t], i) => {
              const Fav = FAVS[f];
              return (
                <Tab key={t} $active={i === 6}>
                  <Fav /><TabTitle>{t}</TabTitle><PlainButton aria-label="Fechar guia"><X s={9} sw={1.7} /></PlainButton>
                </Tab>
              );
            })}
            <PlainButton aria-label="Nova guia"><Ico w={34} h={12} vb="-11 0 34 12" sw={1.6}><path d="M6 1.500v9M1.500 6h9" /></Ico></PlainButton>
            <TabControls>
              <PlainButton aria-label="Pesquisar guias"><Ico s={10} vb="0 0 10 10" sw={1.2}><path d="M1.500 3.500L5 7l3.500-3.500" /></Ico></PlainButton>
              <PlainButton aria-label="Minimizar"><Minus /></PlainButton>
              <PlainButton aria-label="Restaurar"><Restore /></PlainButton>
              <PlainButton aria-label="Fechar"><X s={11} sw={1} /></PlainButton>
            </TabControls>
          </TabStrip>
          <Toolbar>
            <NavButtons>
              <PlainButton aria-label="Voltar"><Ico s={14} sw={2.4}><path d="M21 12H4M11 4l-8 8 8 8" /></Ico></PlainButton>
              <PlainButton aria-label="Avançar"><Ico s={14} sw={2} c="#b4b7bb"><path d="M3 12h17M13 4l8 8-8 8" /></Ico></PlainButton>
              <PlainButton aria-label="Recarregar"><Ico s={14} sw={2.6}><path d="M20 8a9 9 0 1 0 1 6" /><path d="M21.500 3v7h-7z" fill="#50545a" strokeWidth="1" /></Ico></PlainButton>
            </NavButtons>
            <Omnibox>
              <Ico s={12} sw={2}><rect x="4" y="10" width="16" height="12" rx="1" fill="#50545a" /><path d="M8 10V6q0-4 4-4t4 4v4" /></Ico>
              <input aria-label="Endereço" defaultValue="nperf.com/pt/" />
              <IconRow $gap={12}>
                <svg width="13" height="13" viewBox="0 0 24 24" aria-hidden="true"><path d="M12 1c-5 0-8 3.500-8 8 0 5 8 14 8 14s8-9 8-14c0-4.500-3-8-8-8zm0 5a3 3 0 1 1 0 6 3 3 0 0 1 0-6z" fill="#50545a" fillRule="evenodd" /></svg>
                <svg width="12" height="13" viewBox="0 0 24 24" fill="none" strokeWidth="4" aria-hidden="true"><path d="M19 5.500A9.500 9.500 0 0 0 4 7" stroke="#ea4335" /><path d="M4 7a9.500 9.500 0 0 0 0 10" stroke="#fbbc05" /><path d="M4 17a9.500 9.500 0 0 0 14.500 2" stroke="#34a853" /><path d="M18.500 19a9 9 0 0 0 3-7H12" stroke="#4285f4" /></svg>
                <Ico s={13} sw={1.9}><path d="M8 5H2v16h16v-5M6 15c1-5 5-8 10-8V3l6 6-6 5v-4c-5 0-8 2-10 5z" /></Ico>
                <Ico s={13} sw={1.9}><path d="M12 2l3 7 7 .5-5.500 4.700L18.500 22 12 17.500 5.500 22l2-7.800L2 9.500 9 9z" /></Ico>
              </IconRow>
            </Omnibox>
            <ToolbarEnd $gap={10}>
              <Ico s={13} sw={2.2}><rect x="2" y="3" width="20" height="18" /><path d="M15 3h7v18h-7z" fill="#50545a" /></Ico>
              <svg width="18" height="18" viewBox="0 0 18 18" aria-hidden="true"><clipPath id="av"><circle cx="9" cy="9" r="9" /></clipPath><g clipPath="url(#av)"><path d="M0 0h18v18H0z" fill="#c3aea4" /><path d="M3 0h12v7H3z" fill="#5a4a46" /><ellipse cx="9" cy="9" rx="5" ry="6" fill="#b98a76" /><path d="M5 8h3v1H5zM10 8h3v1h-3zM7 12h4v1H7z" fill="#6a4540" /><path d="M0 18q3-5 6-3h6q3-2 6 3z" fill="#96464a" /></g></svg>
              <Ico w={12} h={14} vb="0 0 12 14" sw={0} fill="#50545a"><circle cx="6" cy="2.500" r="1.200" /><circle cx="6" cy="7" r="1.200" /><circle cx="6" cy="11.500" r="1.200" /></Ico>
            </ToolbarEnd>
          </Toolbar>
          <Bookmarks>
            {MARKS.map(([f, t]) => {
              const Fav = FAVS[f];
              return <Bookmark key={t} href="#"><Fav />{t}</Bookmark>;
            })}
            <More aria-label="Mais favoritos">»</More>
          </Bookmarks>

          <Viewport>
            <Page>
              <Hero>
                <Gauge>
                  <GaugeDial />
                  <GaugeButton $top={3}>
                    Reiniciar
                    <Ico w={34} h={36} vb="0 -2 34 36" sw={3} c={GREEN}>
                      <path d="M3 17C3 7 14-1 26 7M31 17c0 10-11 18-23 10" strokeLinecap="butt" /><path d="M29 2v10H19zM5 32V22h10z" fill={GREEN} strokeWidth="1" />
                    </Ico>
                  </GaugeButton>
                  <GaugeButton $top={95}>
                    <Ico w={35} h={25} vb="0 0 35 25" sw={4} c={GREEN}>
                      <path d="M1 2h31M1 8.500h16M1 15h15M1 22h9" strokeLinecap="butt" /><circle cx="22.500" cy="12" r="5.500" strokeWidth="2" fill="#ebecee" /><path d="M27 16.500l6 6" strokeWidth="3" />
                    </Ico>
                    Comparar
                  </GaugeButton>
                </Gauge>
                <HeroPanels>
                  <ChartPanel><SpeedChart /></ChartPanel>
                  <ServerPanel>
                    <ServerArt><ServerDrawing /></ServerArt>
                    <ServerInfo>
                      <span>Santo André, São Paulo</span><span>1 Gb/s JR Fiber</span><span>BR <BrazilFlag /></span>
                    </ServerInfo>
                    <Sponsor><em>Servidor</em><JrLogo /></Sponsor>
                    <ServerButton>Selecão do servidor</ServerButton>
                  </ServerPanel>
                </HeroPanels>
              </Hero>

              <Results>
                <InfoCard>
                  <InfoTable>
                    <tbody>
                      {INFO.map(([k, v, f]) => <InfoRow key={k} $gap={f === "gap"} $warn={f === "warn"}><th scope="row">{k}</th><td>{v}</td></InfoRow>)}
                    </tbody>
                  </InfoTable>
                </InfoCard>
                <Stats>
                  {STATS.map((s) => (
                    <StatCard key={s.t} $c={s.c}>
                      <StatBadge><svg width="36" height="36" viewBox="-1 -1 36 36" aria-hidden="true"><circle cx="17" cy="17" r="16.500" fill="none" stroke={s.c} strokeWidth="1.500" /><path d={s.d} fill={s.c} /></svg></StatBadge>
                      <StatTitle $wide={s.wide}><span>{s.t}</span>{s.more && <b>...</b>}</StatTitle>
                      <StatRows $wide={s.wide}>{s.rows.map(([k, v]) => <React.Fragment key={k}><dt>{k}</dt><dd>{v}</dd></React.Fragment>)}</StatRows>
                      <StatValue $wide={s.wide}>{s.v}<small>{s.u}</small></StatValue>
                    </StatCard>
                  ))}
                </Stats>
              </Results>

              <Barometer>
                <p>Barómetro das ligações à Internet no Brasil</p>
                <BarLinks>
                  <BarButton $w={96}>Ligações WI-FI<br />2022</BarButton>
                  <BarButton $w={94}>Ligações fixas<br />S1 2019</BarButton>
                  <BarButton $w={115}>Ligações móveis<br />S2 2018 / S1 2019</BarButton>
                </BarLinks>
              </Barometer>
              <About>
                <h2>Para que serve o speed test nPerf ?</h2>
                <p>nPerf determina com precisão a capacidade da sua conexão internet.</p>
              </About>
              <BackToTop aria-label="Voltar ao topo"><svg width="30" height="18" viewBox="0 0 30 18" aria-hidden="true"><path d="M2 14L12.500 2q2.500-2 5 0L28 14q2 4-2 4H4q-4 0-2-4z" fill="#fff" /></svg></BackToTop>
              <CookieBar>
                <span>Ao navegar no nPerf.com, você concorda com nossa <a href="#">Política de uso de privacidade e cookies </a>, bem como com o nosso teste nPerf <a href="#">Contrato de licença do usuário final </a>.</span>
                <OkButton>OK</OkButton>
              </CookieBar>
            </Page>
            <ScrollBar>
              <svg width="6" height="4" viewBox="0 0 6 4" aria-hidden="true"><path d="M0 4l3-4 3 4z" fill="#444" /></svg>
              <svg width="6" height="4" viewBox="0 0 6 4" aria-hidden="true"><path d="M0 0l3 4 3-4z" fill="#444" /></svg>
            </ScrollBar>
          </Viewport>

          <Taskbar $remote>
            <Launch $w={38} aria-label="Iniciar"><WinLogo s={13} /></Launch>
            <SearchField>
              <Ico s={14} sw={1.9}><circle cx="14.500" cy="9" r="7" /><path d="M9.500 14.500L2.500 22" /></Ico>
              <input aria-label="Pesquisar" placeholder="Pesquisar" />
              <Gift />
            </SearchField>
            <Launch $w={37} $run aria-label="Notas"><Sticky /></Launch>
            <Launch $w={39} $run aria-label="Outlook"><OutlookOld /></Launch>
            <Launch $w={38} $run $bg="#4a5c68" aria-label="Chrome"><Chrome s={20} /></Launch>
            <Launch $w={39} $run aria-label="Bloco de notas"><Notepad s={18} /></Launch>
            <Launch $w={38} $run $bg="#b06a35" aria-label="AnyDesk"><AnyTile /></Launch>
            <Launch $w={39} $run aria-label="Telefone"><Phone s={18} /></Launch>
            <SystemTray remote />
          </Taskbar>
        </Remote>
      </Stage>

      <Taskbar>
        <Launch $w={44} aria-label="Iniciar"><WinLogo s={15} /></Launch>
        <Launch $w={47} aria-label="Pesquisar"><Ico s={23} sw={2}><circle cx="13.500" cy="9.500" r="7.500" /><path d="M8.500 15L2.500 22" /></Ico></Launch>
        <Launch $w={46} aria-label="Telefone"><Phone s={21} /></Launch>
        <Launch $w={46} $run aria-label="Explorador"><Folder /></Launch>
        <Launch $w={46} $run aria-label="Outlook"><OfficeTile l="O" a="#28a8ea" b="#1470c4" d="#0f5fb3" /></Launch>
        <Launch $w={46} $run aria-label="Chrome"><Chrome s={23} person /></Launch>
        <Launch $w={46} $run aria-label="Skype"><Skype /></Launch>
        <Launch $w={46} $run aria-label="WhatsApp"><WhatsApp /></Launch>
        <Launch $w={46} $run aria-label="Excel"><OfficeTile l="X" a="#21a366" b="#33c481" d="#107c41" /></Launch>
        <Launch $w={46} $run aria-label="Word"><OfficeTile l="W" a="#2b7cd3" b="#41a5ee" d="#185abd" /></Launch>
        <Launch $w={46} $run aria-label="OneNote"><OfficeTile l="N" a="#ca64ea" b="#ae4bd5" d="#7719aa" /></Launch>
        <Launch $w={46} $run aria-label="Spotify"><Spotify /></Launch>
        <Launch $w={46} $run aria-label="Bloco de notas"><Notepad /></Launch>
        <Launch $w={45} $bg="#0f5a9c" aria-label="Documento"><FileIcon /></Launch>
        <SystemTray />
      </Taskbar>
    </Screen>
  );
}
